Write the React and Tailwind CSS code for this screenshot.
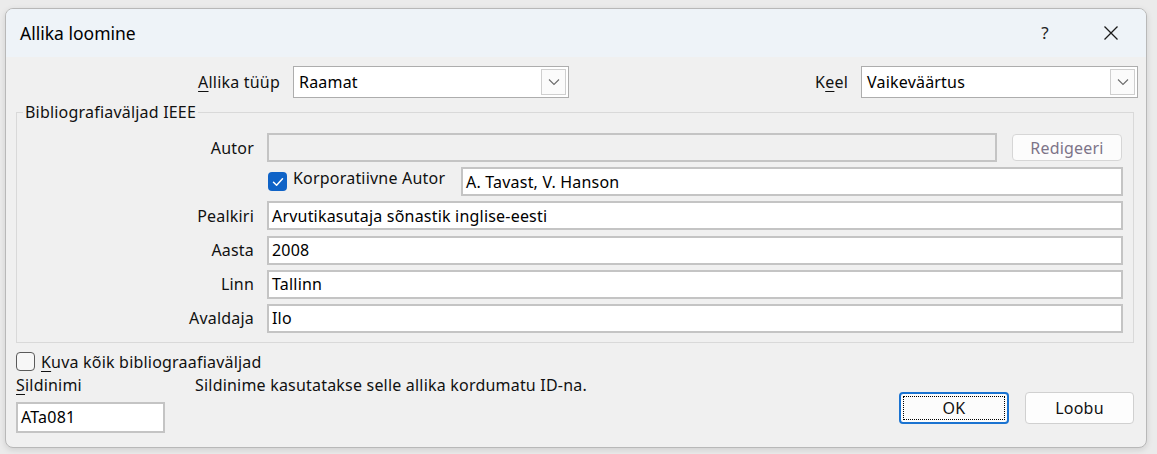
import React from "react";

const font = "font-['Noto_Sans',sans-serif]";
const txt = "text-[16px] tracking-[0.2px]";

function Chevron() {
  return (
    <svg width="12" height="8" viewBox="0 0 12 8" fill="none">
      <path d="M1 1.5 L6 6.5 L11 1.5" stroke="#6b6b6b" strokeWidth="1.1" />
    </svg>
  );
}

function Combo({ value, w }) {
  return (
    <div className={`${w} h-[32px] bg-white border border-[#adadad] flex items-stretch`}>
      <div className={`flex-1 flex items-center pl-[5px] ${txt} text-black`}>{value}</div>
      <div className="w-[25px] m-[2px] border border-[#cfcfcf] bg-[#fbfbfb] flex items-center justify-center">
        <Chevron />
      </div>
    </div>
  );
}

function Input({ value, className = "", disabled = false }) {
  return (
    <div
      className={`h-[29px] border-2 ${disabled ? "bg-[#f0f0f0] border-[#c4c4c4]" : "bg-white border-[#c4c4c4]"} flex items-center pl-[3px] ${txt} text-black ${className}`}
    >
      {value}
    </div>
  );
}

function Label({ children }) {
  return <div className={`h-[29px] flex items-center justify-end ${txt} text-[#111]`}>{children}</div>;
}

function CheckMark() {
  return (
    <svg width="12" height="10" viewBox="0 0 12 10" fill="none">
      <path d="M1.5 5.2 L4.6 8.2 L10.5 1.8" stroke="white" strokeWidth="1.5" strokeLinecap="round" strokeLinejoin="round" />
    </svg>
  );
}

export default function App() {
  return (
    <div className={`w-[1157px] h-[454px] bg-[#ebebeb] pt-[8px] pl-[5px] ${font}`}>
      <div className="w-[1142px] h-[440px] rounded-[8px] border border-[#b8b8b8] overflow-hidden bg-[#f0f0f0] flex flex-col shadow-[0_2px_6px_rgba(0,0,0,0.12)]">
        {/* Title bar */}
        <div className="h-[48px] bg-[#eef3f8] flex items-center pl-[14px] shrink-0">
          <div className="text-[17.5px] text-black flex-1 pt-[1px]">Allika loomine</div>
          <div className="text-[17px] text-[#222] w-[20px] text-center mr-[48px]">?</div>
          <div className="mr-[27px] flex items-center">
            <svg width="16" height="16" viewBox="0 0 16 16" fill="none">
              <path d="M1.5 1.5 L14.5 14.5 M14.5 1.5 L1.5 14.5" stroke="#1a1a1a" strokeWidth="1.3" />
            </svg>
          </div>
        </div>

        {/* Body */}
        <div className="flex-1 flex flex-col pt-[9px]">
          {/* Row 1 */}
          <div className="flex items-center pr-[8px]">
            <div className={`w-[274px] text-right ${txt} text-[#111]`}>
              <span className="underline underline-offset-[3px]">A</span>llika tüüp
            </div>
            <div className="w-[13px]" />
            <Combo value="Raamat" w="w-[276px]" />
            <div className="flex-1" />
            <div className={`${txt} text-[#111]`}>
              K<span className="underline underline-offset-[3px]">e</span>el
            </div>
            <div className="w-[13px]" />
            <Combo value="Vaikeväärtus" w="w-[277px]" />
          </div>

          {/* Group box */}
          <fieldset className="ml-[10px] mr-[12px] mt-[4px] border border-[#d9d9d9] pb-[9px] pr-[10px] pt-[11px] min-w-0">
            <legend className={`ml-[6px] px-[2px] ${txt} text-[#111] leading-[20px]`}>Bibliografiaväljad IEEE</legend>
            <div className="grid grid-cols-[237px_1fr] gap-x-[13px] gap-y-[5.2px]">
              <Label>Autor</Label>
              <div className="flex items-center gap-[15px]">
                <Input value="" disabled className="w-[730px]" />
                <div className={`w-[110px] h-[27px] rounded-[4px] border border-[#d6d6d6] bg-[#fcfcfc] flex items-center justify-center ${txt} text-[#7c7488]`}>
                  Redigeeri
                </div>
              </div>

              <div />
              <div className="flex items-center">
                <div className="w-[19px] h-[19px] rounded-[4px] bg-[#0f63c7] flex items-center justify-center ml-[1px]">
                  <CheckMark />
                </div>
                <div className={`ml-[6px] ${txt} text-[#111] w-[168px] self-start -mt-[1px]`}>Korporatiivne Autor</div>
                <Input value="A. Tavast, V. Hanson" className="flex-1" />
              </div>

              <Label>Pealkiri</Label>
              <Input value="Arvutikasutaja sõnastik inglise-eesti" />

              <Label>Aasta</Label>
              <Input value="2008" />

              <Label>Linn</Label>
              <Input value="Tallinn" />

              <Label>Avaldaja</Label>
              <Input value="Ilo" />
            </div>
          </fieldset>

          {/* Bottom */}
          <div className="pl-[10px] pr-[12px] mt-[9px]">
            <div className="flex items-center h-[20px]">
              <div className="w-[19px] h-[19px] rounded-[4px] border border-[#5a5a5a] bg-[#f7f7f7]" />
              <div className={`ml-[6px] ${txt} text-[#111]`}>
                <span className="underline underline-offset-[3px]">K</span>uva kõik bibliograafiaväljad
              </div>
            </div>
            <div className="flex items-start mt-[2px]">
              <div className="w-[179px] flex flex-col">
                <div className={`${txt} text-[#111] leading-[22px]`}>
                  <span className="underline underline-offset-[3px]">S</span>ildinimi
                </div>
                <Input value="ATa081" className="w-[149px] h-[31px] mt-[6px]" />
              </div>
              <div className={`${txt} text-[#111] leading-[22px] flex-1`}>
                Sildinime kasutatakse selle allika kordumatu ID-na.
              </div>
              <div className="flex gap-[16px] mt-[18px]">
                <div className="w-[110px] h-[32px] rounded-[4px] border-2 border-[#1a73d1] bg-[#fcfcfc] p-[2px]">
                  <div className={`w-full h-full border border-dotted border-black flex items-center justify-center ${txt} text-[#111]`}>
                    OK
                  </div>
                </div>
                <div className={`w-[109px] h-[32px] rounded-[4px] border border-[#d0d0d0] bg-[#fdfdfd] flex items-center justify-center ${txt} text-[#111]`}>
                  Loobu
                </div>
              </div>
            </div>
          </div>
        </div>
      </div>
    </div>
  );
}
